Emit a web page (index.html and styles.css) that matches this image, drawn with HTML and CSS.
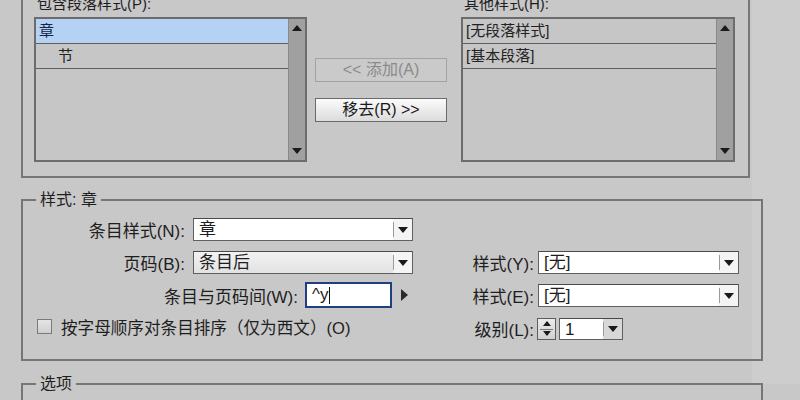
FILE: index.html
```html
<!DOCTYPE html>
<html lang="zh-CN">
<head>
<meta charset="utf-8">
<title>目录</title>
<link rel="stylesheet" href="styles.css">
</head>
<body>
<div class="dialog">
  <div class="frame styles-frame">
    <div class="col">
      <div class="cap">包含段落样式(P):</div>
      <div class="listbox">
        <div class="items">
          <div class="item sel">章</div>
          <div class="item sub">节</div>
        </div>
        <div class="scroll"><span class="tri up"></span><span class="tri down"></span></div>
      </div>
    </div>
    <div class="mid">
      <div class="btn disabled">&lt;&lt; 添加(A)</div>
      <div class="btn">移去(R) &gt;&gt;</div>
    </div>
    <div class="col right-col">
      <div class="cap">其他样式(H):</div>
      <div class="listbox wide">
        <div class="items">
          <div class="item">[无段落样式]</div>
          <div class="item">[基本段落]</div>
        </div>
        <div class="scroll"><span class="tri up"></span><span class="tri down"></span></div>
      </div>
    </div>
  </div>

  <div class="group style-group">
    <div class="legend">样式: 章</div>
    <div class="group-body">
      <div class="left-fields">
        <div class="row">
          <span class="lbl">条目样式(N):</span>
          <div class="select w220"><span class="val">章</span><span class="drop"><i class="tri down"></i></span></div>
        </div>
        <div class="row">
          <span class="lbl">页码(B):</span>
          <div class="select w220 gray"><span class="val">条目后</span><span class="drop"><i class="tri down"></i></span></div>
        </div>
        <div class="row row-sep">
          <span class="lbl grow">条目与页码间(W):</span>
          <div class="input"><span class="val">^y</span><span class="caret"></span></div>
          <span class="tri right"></span>
        </div>
        <div class="row row-check">
          <span class="check"></span>
          <span class="check-text">按字母顺序对条目排序（仅为西文）(O)</span>
        </div>
      </div>
      <div class="right-fields">
        <div class="row">
          <span class="lbl rl">样式(Y):</span>
          <div class="select w201"><span class="val">[无]</span><span class="drop"><i class="tri down"></i></span></div>
        </div>
        <div class="row">
          <span class="lbl rl">样式(E):</span>
          <div class="select w201"><span class="val">[无]</span><span class="drop"><i class="tri down"></i></span></div>
        </div>
        <div class="row">
          <span class="lbl rl">级别(L):</span>
          <div class="spin"><i class="tri up"></i><i class="tri down"></i></div>
          <div class="select w64"><span class="val">1</span><span class="drop"><i class="tri down"></i></span></div>
        </div>
      </div>
    </div>
  </div>

  <div class="group options-group">
    <div class="legend">选项</div>
  </div>
</div>
</body>
</html>
```
FILE: styles.css
```css
* { box-sizing: border-box; }
html, body {
  margin: 0;
  padding: 0;
  width: 800px;
  height: 400px;
  overflow: hidden;
  background: #c8c8c8;
  font-family: "Liberation Sans", "Noto Sans CJK SC", sans-serif;
  color: #1e1e1e;
}
.dialog {
  padding-left: 21px;
  background: linear-gradient(to right, #c8c8c8 0, #c8c8c8 752px, #cdcdcd 752px);
  height: 400px;
}

/* top frame */
.frame {
  width: 729px;
  margin-top: -16px;
  border: 2px solid #767676;
  padding: 8px 13px 14px 11px;
  display: flex;
  align-items: flex-start;
}
.col { width: 273px; }
.right-col { width: 274px; margin-left: 14px; }
.cap {
  font-size: 15px;
  line-height: 20px;
  height: 20px;
  margin-bottom: 3px;
  padding-left: 3px;
}
.listbox {
  width: 273px;
  height: 145px;
  border: 2px solid #6c6c6c;
  display: flex;
  background: #c6c6c6;
}
.listbox.wide { width: 274px; }
.items { flex: 1; }
.item {
  height: 25px;
  line-height: 24px;
  font-size: 15px;
  border-bottom: 1px solid #5e5e5e;
  padding-left: 3px;
  color: #222;
}
.item.sel { background: #b5d2f4; color: #14244a; }
.item.sub { padding-left: 22px; }
.scroll {
  width: 17px;
  background: #a0a0a0;
  border-left: 1px solid #8a8a8a;
  display: flex;
  flex-direction: column;
  justify-content: space-between;
  align-items: center;
  padding: 6px 0 6px;
}

.tri { display: block; width: 0; height: 0; }
.tri.up { border-left: 5px solid transparent; border-right: 5px solid transparent; border-bottom: 6px solid #1a1a1a; }
.tri.down { border-left: 5px solid transparent; border-right: 5px solid transparent; border-top: 6px solid #1a1a1a; }
.tri.right { border-top: 6px solid transparent; border-bottom: 6px solid transparent; border-left: 7px solid #2a2a2a; }

.mid {
  width: 132px;
  margin-left: 8px;
  padding-top: 64px;
  display: flex;
  flex-direction: column;
  gap: 16px;
}
.btn {
  height: 24px;
  border: 1px solid #6a6a6a;
  background: linear-gradient(#fbfbfb, #dcdcdc);
  font-size: 16px;
  line-height: 22px;
  text-align: center;
  color: #1a1a1a;
  white-space: nowrap;
}
.btn.disabled {
  background: #cacaca;
  border-color: #a2a2a2;
  color: #8a8a8a;
}

/* groups */
.group {
  width: 742px;
  border: 2px solid #767676;
  margin-top: 21px;
}
.legend {
  display: block;
  width: max-content;
  font-size: 16px;
  line-height: 20px;
  height: 20px;
  margin: -11px 0 0 13px;
  padding: 0 4px;
  background: #c8c8c8;
}
.style-group { height: 162px; }
.group-body {
  display: flex;
}
.left-fields {
  width: 390px;
  padding-top: 8px;
}
.row {
  display: flex;
  align-items: center;
  height: 23px;
  margin-bottom: 10px;
}
.lbl {
  width: 162px;
  text-align: right;
  font-size: 17px;
  margin-right: 8px;
  white-space: nowrap;
}
.lbl.grow { flex: 1; width: auto; margin-right: 7px; }
.row-sep { height: 26px; margin-bottom: 11px; margin-top: -2px; padding-right: 5px; }
.row-sep .tri.right { margin-left: 9px; }
.select {
  height: 23px;
  border: 1px solid #606060;
  border-top-color: #4a4a4a;
  background: #fff;
  display: flex;
  align-items: stretch;
}
.select.gray { background: linear-gradient(#f2f2f2, #e2e2e2); }
.w220 { width: 220px; }
.w201 { width: 201px; }
.w64 { width: 64px; }
.val {
  flex: 1;
  font-size: 17px;
  line-height: 21px;
  padding-left: 5px;
  white-space: nowrap;
}
.drop {
  width: 19px;
  position: relative;
  display: flex;
  align-items: center;
  justify-content: center;
  background: #f4f4f4;
}
.drop::before {
  content: "";
  position: absolute;
  left: 0;
  top: 3px;
  bottom: 3px;
  width: 1px;
  background: #9a9a9a;
}
.select.w64 .drop { background: #d8d8d8; }
.input {
  width: 87px;
  height: 26px;
  border: 2px solid #203e86;
  background: #fff;
  display: flex;
  align-items: center;
}
.input .val { flex: none; padding-left: 5px; line-height: 20px; }
.caret { width: 1px; height: 17px; background: #111; margin-left: 1px; }
.row-check { height: 15px; padding-left: 14px; margin-bottom: 0; }
.check {
  width: 15px;
  height: 15px;
  border: 1px solid #7a7a7a;
  background: linear-gradient(#e4e4e4, #cfcfcf);
}
.check-text { font-size: 16.6px; margin-left: 9px; white-space: nowrap; }

.right-fields {
  width: 348px;
  padding-top: 41px;
}
.lbl.rl { width: 121px; margin-right: 4px; }
.right-fields .row { height: 23px; }
.spin {
  width: 19px;
  height: 22px;
  border: 1px solid #5e5e5e;
  background: linear-gradient(#ececec, #d0d0d0);
  display: flex;
  flex-direction: column;
  align-items: center;
  justify-content: space-around;
  margin-left: -1px;
  margin-right: 3px;
  position: relative;
}
.spin .tri.up { border-left-width: 4px; border-right-width: 4px; border-bottom-width: 5px; }
.spin .tri.down { border-left-width: 4px; border-right-width: 4px; border-top-width: 5px; }
.spin::after {
  content: "";
  position: absolute;
  left: 2px; right: 2px; top: 10px;
  height: 1px;
  background: #777;
}
.select.w64 { height: 22px; }

.options-group { height: 40px; margin-top: 22px; }
```
